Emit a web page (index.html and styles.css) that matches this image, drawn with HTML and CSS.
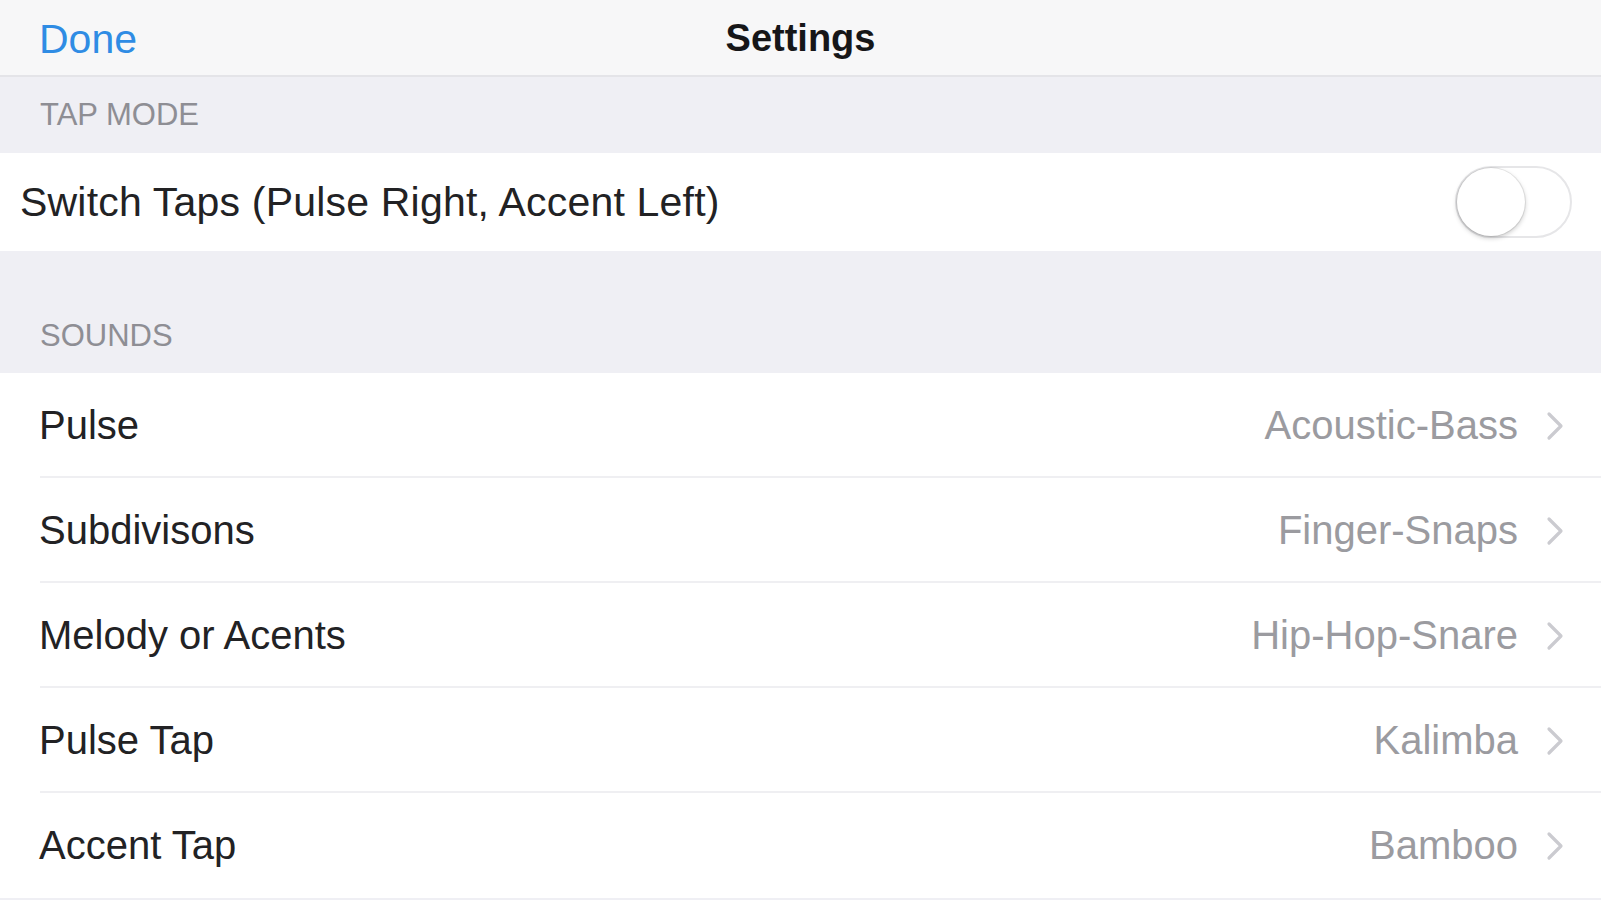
FILE: index.html
```html
<!DOCTYPE html>
<html lang="en">
<head>
<meta charset="utf-8">
<title>Settings</title>
<link rel="stylesheet" href="styles.css">
</head>
<body>
<div class="screen">
  <header class="navbar">
    <span class="nav-done">Done</span>
    <span class="nav-title">Settings</span>
  </header>

  <div class="section-header first">TAP MODE</div>
  <div class="switch-row">
    <span class="switch-label">Switch Taps (Pulse Right, Accent Left)</span>
    <span class="toggle"><span class="knob"></span></span>
  </div>

  <div class="section-header sounds">SOUNDS</div>
  <ul class="list">
    <li class="row"><span class="label">Pulse</span><span class="value">Acoustic-Bass</span><svg class="chevron" viewBox="0 0 18 30"><path d="M3 3 L15 15 L3 27"/></svg></li>
    <li class="row"><span class="label">Subdivisons</span><span class="value">Finger-Snaps</span><svg class="chevron" viewBox="0 0 18 30"><path d="M3 3 L15 15 L3 27"/></svg></li>
    <li class="row"><span class="label">Melody or Acents</span><span class="value">Hip-Hop-Snare</span><svg class="chevron" viewBox="0 0 18 30"><path d="M3 3 L15 15 L3 27"/></svg></li>
    <li class="row"><span class="label">Pulse Tap</span><span class="value">Kalimba</span><svg class="chevron" viewBox="0 0 18 30"><path d="M3 3 L15 15 L3 27"/></svg></li>
    <li class="row"><span class="label">Accent Tap</span><span class="value">Bamboo</span><svg class="chevron" viewBox="0 0 18 30"><path d="M3 3 L15 15 L3 27"/></svg></li>
  </ul>
</div>
</body>
</html>
```
FILE: styles.css
```css
* { box-sizing: border-box; }
html, body {
  margin: 0;
  padding: 0;
  background: #efeff4;
  font-family: "Liberation Sans", Arial, Helvetica, sans-serif;
  color: #1f1f21;
  overflow: hidden;
}
.screen {
  width: 1601px;
  height: 900px;
  display: flex;
  flex-direction: column;
  background: #efeff4;
}
.navbar {
  height: 77px;
  flex: 0 0 77px;
  background: #f7f7f8;
  border-bottom: 2px solid #e4e4e8;
  display: flex;
  align-items: center;
  justify-content: center;
  position: relative;
}
.nav-done {
  position: absolute;
  left: 39px;
  top: 19px;
  font-size: 41px;
  color: #2f8ce4;
  line-height: 40px;
}
.nav-title {
  font-size: 38px;
  font-weight: bold;
  color: #161618;
  line-height: 40px;
}
.section-header {
  font-size: 31px;
  color: #8e8e94;
  padding-left: 40px;
  display: flex;
  align-items: center;
}
.section-header.first {
  height: 76px;
  flex: 0 0 76px;
}
.section-header.sounds {
  height: 122px;
  flex: 0 0 122px;
  align-items: flex-end;
  padding-bottom: 19px;
}
.switch-row {
  height: 98px;
  flex: 0 0 98px;
  background: #ffffff;
  display: flex;
  align-items: center;
  justify-content: space-between;
  padding: 0 29px 0 20px;
}
.switch-label {
  font-size: 41px;
  letter-spacing: 0.2px;
  color: #222224;
}
.toggle {
  width: 117px;
  height: 72px;
  border-radius: 36px;
  border: 2px solid #e6e6e8;
  background: #ffffff;
  position: relative;
  display: block;
}
.knob {
  position: absolute;
  left: 0px;
  top: 0px;
  width: 68px;
  height: 68px;
  border-radius: 50%;
  background: #ffffff;
  box-shadow: 0 2px 5px rgba(0,0,0,0.22), 0 0 0 1px rgba(0,0,0,0.08);
}
.list {
  list-style: none;
  margin: 0;
  padding: 0;
  background: #ffffff;
}
.row {
  height: 105px;
  display: flex;
  align-items: center;
  padding: 0 37px 0 39px;
  position: relative;
}
.row::after {
  content: "";
  position: absolute;
  left: 40px;
  right: 0;
  bottom: 0;
  height: 2px;
  background: #efeff2;
}
.row:last-child::after {
  left: 0;
  background: #efeff4;
  height: 8px;
  bottom: -8px;
}
.label {
  flex: 1;
  font-size: 40px;
  color: #222224;
}
.value {
  font-size: 40px;
  color: #9b9ba0;
  margin-right: 28px;
}
.chevron {
  width: 18px;
  height: 30px;
  fill: none;
  stroke: #cbcbd0;
  stroke-width: 3.2;
  stroke-linecap: round;
  stroke-linejoin: round;
}
```
